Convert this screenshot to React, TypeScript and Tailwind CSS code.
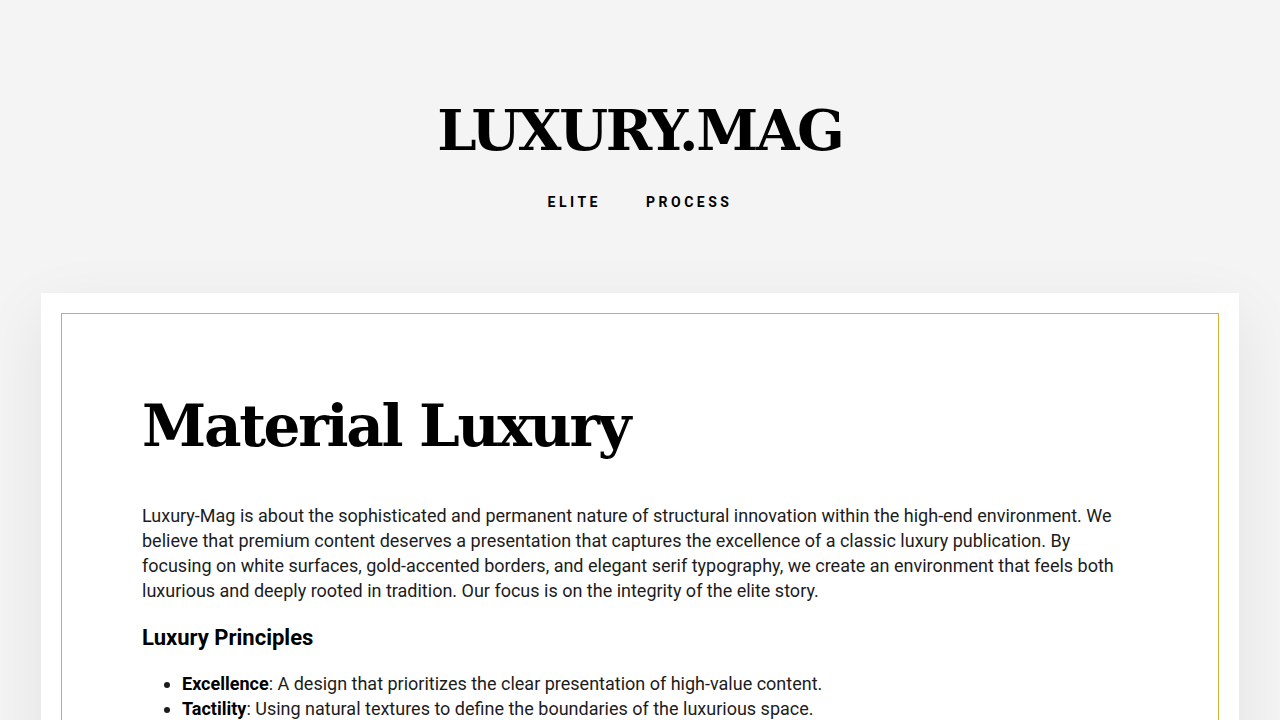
const serif = "font-['DejaVu_Serif',serif]";

const principles = [
  { term: "Excellence", text: "A design that prioritizes the clear presentation of high-value content." },
  { term: "Tactility", text: "Using natural textures to define the boundaries of the luxurious space." },
  { term: "Heritage", text: "Respecting the traditions of the classic printed luxury magazine." },
];

export default function App() {
  return (
    <div className="min-h-screen bg-[#f4f4f4] font-['Roboto',sans-serif] text-[#1c1c1c]">
      <header className="pt-[94px] pb-[81px] text-center">
        <h1 className={`${serif} text-[56px] font-bold leading-[72px] tracking-[-0.04em] text-black`}>
          LUXURY.MAG
        </h1>
        <nav className="mt-[26px] flex justify-center gap-[45px] text-[14px] leading-[20px] font-bold tracking-[0.25em] text-black">
          <a href="#">ELITE</a>
          <a href="#">PROCESS</a>
        </nav>
      </header>

      <main className="px-[41px]">
        <div className="bg-white p-5 shadow-[0_20px_60px_rgba(0,0,0,0.08)]">
          <article className="border border-[#d4af37] px-20 pt-[80px] pb-20">
            <h2 className={`${serif} text-[58px] font-bold leading-[64px] tracking-[-0.04em] text-black`}>
              Material Luxury
            </h2>
            <p className="mt-[45px] max-w-[990px] text-wrap text-[18px] leading-[25px]">
              Luxury-Mag is about the sophisticated and permanent nature of structural innovation within the
              high-end environment. We believe that premium content deserves a presentation that captures the
              excellence of a classic luxury publication. By focusing on white surfaces, gold-accented borders, and
              elegant serif typography, we create an environment that feels both luxurious and deeply rooted in
              tradition. Our focus is on the integrity of the elite story.
            </p>
            <h3 className="mt-[20px] text-[22px] font-bold leading-[30px] text-black">Luxury Principles</h3>
            <ul className="mt-[18px] list-disc pl-10 text-[18px] leading-[25px]">
              {principles.map((p) => (
                <li key={p.term}>
                  <strong className="font-bold text-black">{p.term}</strong>: {p.text}
                </li>
              ))}
            </ul>
          </article>
        </div>
      </main>
    </div>
  );
}
